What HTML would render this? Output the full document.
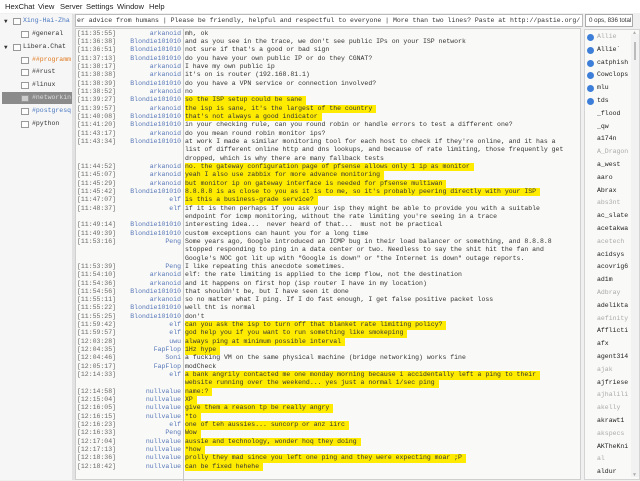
<!DOCTYPE html>
<html><head><meta charset="utf-8"><style>
*{margin:0;padding:0;box-sizing:border-box}
body{width:640px;height:480px;overflow:hidden;background:#f0f0f0;font-family:"Liberation Mono","DejaVu Sans Mono",monospace;font-size:6.5px;color:#333;position:relative}
.a{position:absolute;white-space:pre}
#menu{position:absolute;left:0;top:0;width:640px;height:13px;background:#fff;font-family:"Liberation Sans",sans-serif;font-size:7.6px;color:#222}
#menu span{position:absolute;top:2px}
#tree{position:absolute;left:0;top:14px;width:72px;height:466px;background:#f6f6f6}
#chat{position:absolute;left:75px;top:28px;width:506px;height:452px;background:#f9f9f7;border:1px solid #cfcfcf}
#topic{position:absolute;left:75px;top:14px;width:508px;height:13px;background:#fff;border:1px solid #bbb;overflow:hidden}
#ops{position:absolute;left:585px;top:14px;width:48px;height:13px;background:#fff;border:1px solid #aaa;font-family:"Liberation Sans",sans-serif;font-size:6.2px;color:#333;padding:2px 0 0 3px;white-space:nowrap}
#ul{position:absolute;left:584px;top:29px;width:56px;height:451px;background:#f9f9f7;border:1px solid #d4d4d4}
.ts{color:#6a6a6a}
.nk{color:#5676b8;text-align:right;width:106px}
.h{background:#ffeb00;padding-right:4px;display:inline-block;height:8.4px;line-height:8.4px}
.r{line-height:8.4px}
.dot{position:absolute;width:7px;height:7px;border-radius:50%;background:#3d7fd8}
.u{position:absolute;left:12px;color:#222}
.g{color:#aaa}
.ic{position:absolute;width:8px;height:7px;border:1px solid #999;background:#fdfdfd}
</style></head><body>
<div id="menu"><span style="left:5px">HexChat</span><span style="left:38px">View</span><span style="left:60px">Server</span><span style="left:86px">Settings</span><span style="left:117px">Window</span><span style="left:149px">Help</span></div>
<div id="tree">
<div style="position:absolute;left:2px;top:78px;width:70px;height:12px;background:#8b8b8b"></div>
<div class="a" style="left:4px;top:4px;font-size:6px">▼</div><div class="ic" style="left:13px;top:4px"></div><div class="a" style="left:23px;top:3px;color:#4a78c0">Xing-Hai-Zha</div>
<div class="ic" style="left:21px;top:17px"></div><div class="a" style="left:32px;top:16px">#general</div>
<div class="a" style="left:4px;top:30px;font-size:6px">▼</div><div class="ic" style="left:13px;top:30px"></div><div class="a" style="left:23px;top:29px">Libera.Chat</div>
<div class="ic" style="left:21px;top:43px"></div><div class="a" style="left:32px;top:42px;color:#e07a20">##programm</div>
<div class="ic" style="left:21px;top:55px"></div><div class="a" style="left:32px;top:54px">##rust</div>
<div class="ic" style="left:21px;top:68px"></div><div class="a" style="left:32px;top:67px">#linux</div>
<div class="ic" style="left:21px;top:81px;background:#ccc"></div><div class="a" style="left:32px;top:80px;color:#ddd">#networkin</div>
<div class="ic" style="left:21px;top:94px"></div><div class="a" style="left:32px;top:93px;color:#4a78c0">#postgresq</div>
<div class="ic" style="left:21px;top:107px"></div><div class="a" style="left:32px;top:106px">#python</div>
</div>
<div style="position:absolute;left:72px;top:14px;width:3px;height:466px;background:#e2e2e2"></div>
<div id="topic"><div class="a" style="left:1px;top:2px">er advice from humans | Please be friendly, helpful and respectful to everyone | More than two lines? Paste at http://pastie.org/</div></div>
<div id="ops">0 ops, 836 total</div>
<div id="chat">
<div style="position:absolute;left:107px;top:0;width:1px;height:452px;background:#c8c8c8"></div>
</div>
<div id="ul">
<div style="position:absolute;left:46px;top:4px;width:8px;height:443px;background:#f2f2f2"></div>
<div style="position:absolute;left:49px;top:12px;width:2px;height:18px;background:#bbb"></div>
<div class="a" style="left:48px;top:0px;font-size:5px;color:#aaa">▲</div>
<div class="a" style="left:48px;top:442px;font-size:5px;color:#aaa">▼</div>
<div class="dot" style="left:2px;top:4px"></div><div class="a u g" style="top:3px">Allie</div>
<div class="dot" style="left:2px;top:17px"></div><div class="a u" style="top:16px">Allie`</div>
<div class="dot" style="left:2px;top:30px"></div><div class="a u" style="top:29px">catphish</div>
<div class="dot" style="left:2px;top:42px"></div><div class="a u" style="top:41px">Cowclops</div>
<div class="dot" style="left:2px;top:55px"></div><div class="a u" style="top:54px">mlu</div>
<div class="dot" style="left:2px;top:68px"></div><div class="a u" style="top:67px">tds</div>
<div class="a u" style="top:80px">_flood</div>
<div class="a u" style="top:93px">_qw</div>
<div class="a u" style="top:105px">a174n</div>
<div class="a u g" style="top:118px">A_Dragon</div>
<div class="a u" style="top:131px">a_west</div>
<div class="a u" style="top:144px">aaro</div>
<div class="a u" style="top:157px">Abrax</div>
<div class="a u g" style="top:169px">abs3nt</div>
<div class="a u" style="top:182px">ac_slate</div>
<div class="a u" style="top:195px">acetakwa</div>
<div class="a u g" style="top:208px">acetech</div>
<div class="a u" style="top:221px">acidsys</div>
<div class="a u" style="top:233px">acovrig6</div>
<div class="a u" style="top:246px">ad1m</div>
<div class="a u g" style="top:259px">Adbray</div>
<div class="a u" style="top:272px">adelikta</div>
<div class="a u g" style="top:285px">aefinity</div>
<div class="a u" style="top:297px">Afflicti</div>
<div class="a u" style="top:310px">afx</div>
<div class="a u" style="top:323px">agent314</div>
<div class="a u g" style="top:336px">ajak</div>
<div class="a u" style="top:349px">ajfriese</div>
<div class="a u g" style="top:361px">ajhalili</div>
<div class="a u g" style="top:374px">akelly</div>
<div class="a u" style="top:387px">akrawt1</div>
<div class="a u g" style="top:400px">akspecs</div>
<div class="a u" style="top:413px">AKTheKni</div>
<div class="a u g" style="top:425px">al</div>
<div class="a u" style="top:438px">aldur</div>
</div>
<div id="c" style="position:absolute;left:0;top:0"></div>
<script>
var L=[
["11:35:55","arkanoid",0,"mh, ok"],
["11:36:38","Blondie101010",0,"and as you see in the trace, we don't see public IPs on your ISP network"],
["11:36:51","Blondie101010",0,"not sure if that's a good or bad sign"],
["11:37:13","Blondie101010",0,"do you have your own public IP or do they CGNAT?"],
["11:38:17","arkanoid",0,"I have my own public ip"],
["11:38:38","arkanoid",0,"it's on is router (192.168.81.1)"],
["11:38:39","Blondie101010",0,"do you have a VPN service or connection involved?"],
["11:38:52","arkanoid",0,"no"],
["11:39:27","Blondie101010",1,"so the ISP setup could be sane"],
["11:39:57","arkanoid",1,"the isp is sane, it's the largest of the country"],
["11:40:08","Blondie101010",1,"that's not always a good indicator"],
["11:41:20","Blondie101010",0,"in your checking rule, can you round robin or handle errors to test a different one?"],
["11:43:17","arkanoid",0,"do you mean round robin monitor ips?"],
["11:43:34","Blondie101010",0,"at work I made a similar monitoring tool for each host to check if they're online, and it has a"],
["","",0,"list of different online http and dns lookups, and because of rate limiting, those frequently get"],
["","",0,"dropped, which is why there are many fallback tests"],
["11:44:52","arkanoid",1,"no. the gateway configuration page of pfsense allows only 1 ip as monitor"],
["11:45:07","arkanoid",1,"yeah I also use zabbix for more advance monitoring"],
["11:45:29","arkanoid",1,"but monitor ip on gateway interface is needed for pfsense multiwan"],
["11:45:42","Blondie101010",1,"8.8.8.8 is as close to you as it is to me, so it's probably peering directly with your ISP"],
["11:47:07","elf",1,"is this a business-grade service?"],
["11:48:37","elf",0,"if it is then perhaps if you ask your isp they might be able to provide you with a suitable"],
["","",0,"endpoint for icmp monitoring, without the rate limiting you're seeing in a trace"],
["11:49:14","Blondie101010",0,"interesting idea...  never heard of that...  must not be practical"],
["11:49:39","Blondie101010",0,"custom exceptions can haunt you for a long time"],
["11:53:16","Peng",0,"Some years ago, Google introduced an ICMP bug in their load balancer or something, and 8.8.8.8"],
["","",0,"stopped responding to ping in a data center or two. Needless to say the shit hit the fan and"],
["","",0,"Google's NOC got lit up with \"Google is down\" or \"the Internet is down\" outage reports."],
["11:53:39","Peng",0,"I like repeating this anecdote sometimes."],
["11:54:10","arkanoid",0,"elf: the rate limiting is applied to the icmp flow, not the destination"],
["11:54:36","arkanoid",0,"and it happens on first hop (isp router I have in my location)"],
["11:54:56","Blondie101010",0,"that shouldn't be, but I have seen it done"],
["11:55:11","arkanoid",0,"so no matter what I ping. If I do fast enough, I get false positive packet loss"],
["11:55:22","Blondie101010",0,"well tht is normal"],
["11:55:25","Blondie101010",0,"don't"],
["11:59:42","elf",1,"can you ask the isp to turn off that blanket rate limiting policy?"],
["11:59:57","elf",1,"god help you if you want to run something like smokeping"],
["12:03:28","uwu",1,"always ping at minimum possible interval"],
["12:04:35","FapFlop",1,"1Hz hype"],
["12:04:46","Soni",0,"a fucking VM on the same physical machine (bridge networking) works fine"],
["12:05:17","FapFlop",0,"modCheck"],
["12:14:33","elf",1,"a bank angrily contacted me one monday morning because i accidentally left a ping to their"],
["","",1,"website running over the weekend... yes just a normal 1/sec ping"],
["12:14:58","nullvalue",1,"name:?"],
["12:15:04","nullvalue",1,"XP"],
["12:16:05","nullvalue",1,"give them a reason tp be really angry"],
["12:16:15","nullvalue",1,"*to"],
["12:16:23","elf",1,"one of teh aussies... suncorp or anz iirc"],
["12:16:33","Peng",1,"Wow"],
["12:17:04","nullvalue",1,"aussie and technology, wonder hoq they doing"],
["12:17:13","nullvalue",1,"*how"],
["12:18:36","nullvalue",1,"prolly they mad since you left one ping and they were expecting moar ;P"],
["12:18:42","nullvalue",1,"can be fixed hehehe"]
];
function e(s){return s.replace(/&/g,"&amp;").replace(/</g,"&lt;")}
var h="";
for(var i=0;i<L.length;i++){var y=(29.6+i*8.33).toFixed(2);var r=L[i];
if(r[0])h+='<div class="a ts r" style="left:77px;top:'+y+'px">['+r[0]+']</div><div class="a nk r" style="left:75px;top:'+y+'px">'+r[1]+'</div>';
h+='<div class="a r" style="left:185px;top:'+y+'px"><span'+(r[2]?' class="h"':'')+'>'+e(r[3])+'</span></div>';}
document.getElementById("c").innerHTML=h;
</script>
</body></html>
